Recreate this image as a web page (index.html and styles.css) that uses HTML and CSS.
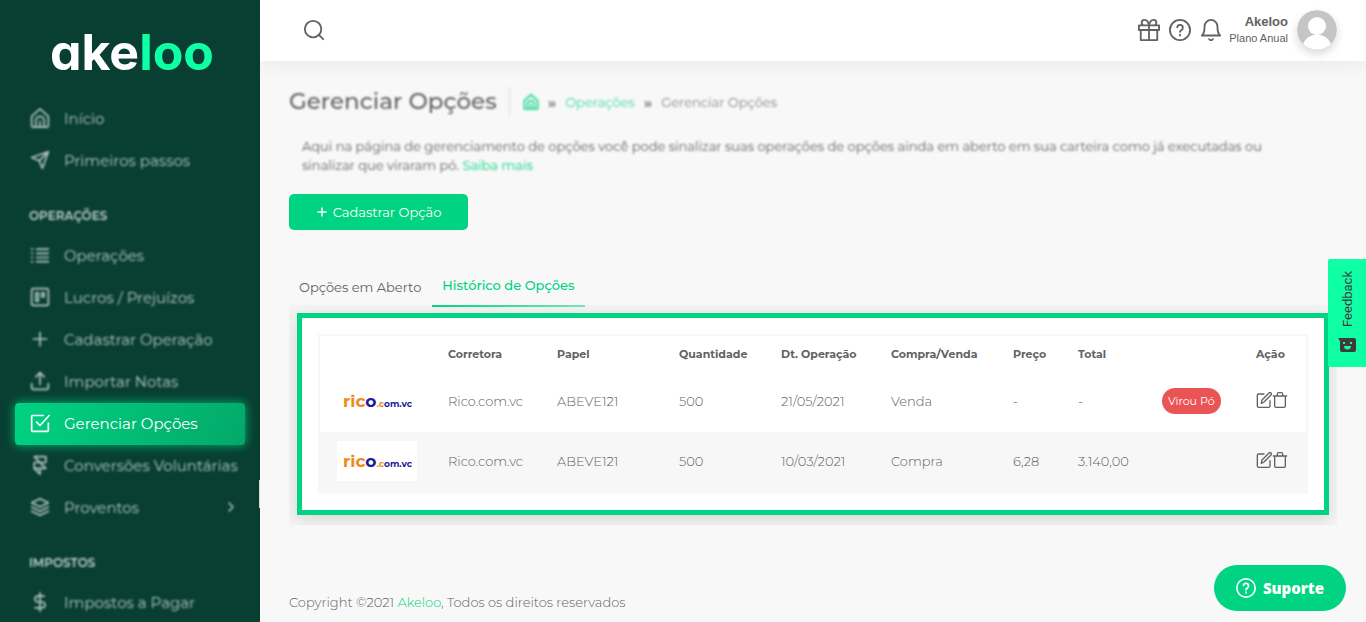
FILE: index.html
```html
<!DOCTYPE html>
<html lang="pt-BR">
<head>
	<meta charset="utf-8">
	<meta name="viewport" content="width=device-width, initial-scale=1.0">
	<title>Gerenciar Opções - Akeloo</title>
	<link rel="stylesheet" href="styles.css">
</head>
<body>
	<svg class="sprite" aria-hidden="true">
		<symbol id="home" viewBox="0 0 24 24"><path d="M2 10v11a2 2 0 0 0 2 2h16a2 2 0 0 0 2-2V10l-10-9z"/><path d="M7 22v-7a5 5 0 0 1 10 0v7M12 16v6"/></symbol>
		<symbol id="send" viewBox="0 0 24 24"><path d="M22 2 11 13M22 2l-7 20-4-9-9-4z"/></symbol>
		<symbol id="list" viewBox="0 0 24 24"><path d="M8 5h14M8 10h14M8 15h14M8 20h14M2 5h1M2 10h1M2 15h1M2 20h1"/></symbol>
		<symbol id="board" viewBox="0 0 24 24"><rect x="2" y="2" width="20" height="20" rx="2"/><path d="M7 7h3v10H7zM14 7h3v5h-3z"/></symbol>
		<symbol id="plus" viewBox="0 0 24 24"><path d="M12 4v16M4 12h16"/></symbol>
		<symbol id="upload" viewBox="0 0 24 24"><path d="M2 15v5a2 2 0 0 0 2 2h16a2 2 0 0 0 2-2v-5M17 7l-5-5-5 5M12 2v14"/></symbol>
		<symbol id="check" viewBox="0 0 24 24"><path d="m8 11 4 4L23 3"/><path d="M22 12v9a1 1 0 0 1-1 1H3a1 1 0 0 1-1-1V4a1 1 0 0 1 1-1h13"/></symbol>
		<symbol id="convert" viewBox="0 0 24 24"><path d="M5 16V9h14V2H5l14 14H5l7 7v-7"/></symbol>
		<symbol id="layers" viewBox="0 0 24 24"><path d="M12 2 2 7l10 5 10-5zM2 17l10 5 10-5M2 12l10 5 10-5"/></symbol>
		<symbol id="dollar" viewBox="0 0 24 24"><path d="M12 1v22M17 5H9.500a3.500 3.500 0 0 0 0 7h5a3.500 3.500 0 0 1 0 7H6"/></symbol>
		<symbol id="right" viewBox="0 0 24 24"><path d="m8 4 8 8-8 8"/></symbol>
		<symbol id="search" viewBox="0 0 24 24"><circle cx="11" cy="11" r="9"/><path d="m22 22-5-5"/></symbol>
		<symbol id="gift" viewBox="0 0 24 24"><path d="M3 12v11h18V12M1 7h22v5H1zM12 7v16M12 7H7a3 3 0 1 1 0-6c4 0 5 6 5 6zM12 7h5a3 3 0 1 0 0-6c-4 0-5 6-5 6z"/></symbol>
		<symbol id="help" viewBox="0 0 24 24"><circle cx="12" cy="12" r="11"/><path d="M9 9a3 3 0 0 1 6 1c0 2-3 2.500-3 4M12 17v1"/></symbol>
		<symbol id="bell" viewBox="0 0 24 24"><path d="M19 8A7 7 0 0 0 5 8c0 8-3 10-3 10h20s-3-2-3-10M14 22a2.300 2.300 0 0 1-4 0"/></symbol>
		<symbol id="edit" viewBox="0 0 24 24"><path d="M12 3H4a2 2 0 0 0-2 2v16a2 2 0 0 0 2 2h15a2 2 0 0 0 2-2v-8"/><path d="M19.500 1.500a2.100 2.100 0 0 1 3 3L12 15l-4 2 1-5z"/></symbol>
		<symbol id="trash" viewBox="0 0 24 24"><path d="M2 6h20M20 6v15a2 2 0 0 1-2 2H6a2 2 0 0 1-2-2V6M8 5V3a2 2 0 0 1 2-2h4a2 2 0 0 1 2 2v2"/></symbol>
	</svg>

	<div class="app">
		<aside class="sidebar">
			<a class="logo" href="#">ake<span>loo</span></a>
			<nav class="menu">
				<a class="item" href="#"><svg><use href="#home"/></svg>Início</a>
				<a class="item" href="#"><svg><use href="#send"/></svg>Primeiros passos</a>
				<p class="section">OPERAÇÕES</p>
				<a class="item" href="#"><svg><use href="#list"/></svg>Operações</a>
				<a class="item" href="#"><svg><use href="#board"/></svg>Lucros / Prejuízos</a>
				<a class="item" href="#"><svg><use href="#plus"/></svg>Cadastrar Operação</a>
				<a class="item" href="#"><svg><use href="#upload"/></svg>Importar Notas</a>
				<a class="item active" href="#"><svg><use href="#check"/></svg>Gerenciar Opções</a>
				<a class="item" href="#"><svg><use href="#convert"/></svg>Conversões Voluntárias</a>
				<a class="item" href="#"><svg><use href="#layers"/></svg>Proventos<svg class="arrow"><use href="#right"/></svg></a>
				<p class="section">IMPOSTOS</p>
				<a class="item" href="#"><svg><use href="#dollar"/></svg>Impostos a Pagar</a>
			</nav>
		</aside>

		<div class="page">
			<header class="topbar">
				<button class="icon-btn" aria-label="Buscar"><svg><use href="#search"/></svg></button>
				<div class="tools">
					<button class="icon-btn" aria-label="Presentes"><svg><use href="#gift"/></svg></button>
					<button class="icon-btn" aria-label="Ajuda"><svg><use href="#help"/></svg></button>
					<button class="icon-btn" aria-label="Notificações"><svg><use href="#bell"/></svg></button>
				</div>
				<div class="user"><strong>Akeloo</strong><span>Plano Anual</span></div>
				<svg class="avatar" viewBox="0 0 40 40"><circle cx="20" cy="20" r="20" fill="#c5c5c5"/><circle cx="20" cy="16" r="9" fill="#fff"/><path d="M6 34a15 15 0 0 1 28 0 20 20 0 0 1-28 0z" fill="#fff"/></svg>
			</header>

			<main class="content">
				<div class="heading">
					<h2>Gerenciar Opções</h2>
					<nav class="crumbs">
						<a href="#" aria-label="Início"><svg><use href="#home"/></svg></a>
						<b>»</b>
						<a href="#">Operações</a>
						<b>»</b>
						<span>Gerenciar Opções</span>
					</nav>
				</div>
				<p class="intro">Aqui na página de gerenciamento de opções você pode sinalizar suas operações de opções ainda em aberto em sua carteira como já executadas ou sinalizar que viraram pó. <a href="#">Saiba mais</a></p>
				<button class="add"><svg><use href="#plus"/></svg>Cadastrar Opção</button>

				<div class="tabs">
					<button class="tab">Opções em Aberto</button>
					<button class="tab on">Histórico de Opções</button>
				</div>
				<div class="card">
					<div class="highlight">
						<table>
							<colgroup>
								<col class="w-logo"><col class="w-broker"><col class="w-paper"><col class="w-qty"><col class="w-date"><col class="w-type"><col class="w-price"><col class="w-total"><col class="w-status"><col class="w-action">
							</colgroup>
							<thead>
								<tr><th></th><th>Corretora</th><th>Papel</th><th>Quantidade</th><th>Dt. Operação</th><th>Compra/Venda</th><th>Preço</th><th>Total</th><th></th><th>Ação</th></tr>
							</thead>
							<tbody>
								<tr>
									<td><div class="rico"><span class="orange">ric</span>o<small><span class="orange">.c</span>om.vc</small></div></td>
									<td>Rico.com.vc</td><td>ABEVE121</td><td>500</td><td>21/05/2021</td><td>Venda</td><td>-</td><td>-</td>
									<td><span class="badge">Virou Pó</span></td>
									<td><div class="actions"><button aria-label="Editar"><svg><use href="#edit"/></svg></button><button aria-label="Excluir"><svg><use href="#trash"/></svg></button></div></td>
								</tr>
								<tr>
									<td><div class="rico"><span class="orange">ric</span>o<small><span class="orange">.c</span>om.vc</small></div></td>
									<td>Rico.com.vc</td><td>ABEVE121</td><td>500</td><td>10/03/2021</td><td>Compra</td><td>6,28</td><td>3.140,00</td>
									<td></td>
									<td><div class="actions"><button aria-label="Editar"><svg><use href="#edit"/></svg></button><button aria-label="Excluir"><svg><use href="#trash"/></svg></button></div></td>
								</tr>
							</tbody>
						</table>
					</div>
				</div>
			</main>
			<footer class="footer">Copyright ©2021 <a href="#">Akeloo</a>, Todos os direitos reservados</footer>
		</div>
	</div>

	<button class="feedback">
		<span>Feedback</span>
		<svg viewBox="0 0 18 14"><path d="M0 0h16a2 2 0 0 1 2 2v10a2 2 0 0 1-2 2H4a2 2 0 0 1-2-2V3z" fill="#3c3c3b"/><path d="M5 4h2v2H5zM12 4h2v2h-2zM6 8h7a3 3 0 0 1-7 0z" fill="#0fffa5"/></svg>
	</button>
	<button class="support"><svg><use href="#help"/></svg>Suporte</button>
</body>
</html>
```
FILE: styles.css
```css
* {
	box-sizing: border-box;
}
body {
	margin: 0;
	font-family: Montserrat, Inter, sans-serif;
	font-size: 13px;
	color: #626262;
	background-color: #f8f8f8;
}
p, h2 {
	margin: 0;
}
a {
	color: #00d382;
	text-decoration: none;
}
button {
	font: inherit;
	color: inherit;
	background: none;
	border: none;
	padding: 0;
	cursor: pointer;
}
svg {
	display: block;
	flex: none;
	fill: none;
	stroke: currentColor;
	stroke-width: 2;
	stroke-linecap: round;
	stroke-linejoin: round;
}
.sprite {
	position: absolute;
	width: 0;
	height: 0;
}
.app {
	display: flex;
	min-height: 100vh;
}

/* sidebar */
.sidebar {
	position: sticky;
	top: 0;
	flex: none;
	width: 260px;
	height: 100vh;
	overflow: hidden;
	background-color: #083f32;
}
.sidebar::after {
	content: "";
	position: absolute;
	top: 480px;
	right: 0;
	width: 1px;
	height: 28px;
	background-color: #cfd9d6;
}
.logo {
	display: block;
	height: 98px;
	padding: 22px 0 0 4px;
	font-family: Inter, sans-serif;
	font-size: 50px;
	font-weight: 700;
	line-height: 60px;
	font-feature-settings: "cv11";
	text-align: center;
	color: #fff;
}
.logo span {
	color: #0fffa5;
}
.menu {
	padding: 0 15px;
}
.item {
	display: flex;
	align-items: center;
	gap: 14px;
	height: 42px;
	padding: 0 8px 2px 15px;
	font-size: 15px;
	white-space: nowrap;
	color: #b5c5c1;
	filter: blur(1px);
}
.item svg {
	width: 20px;
	height: 20px;
}
.item .arrow {
	width: 12px;
	height: 12px;
	margin-left: auto;
	stroke-width: 3;
}
.item.active {
	border-radius: 4px;
	color: #fff;
	background-image: linear-gradient(118deg, #00d382, #04a869);
	box-shadow: 0 0 10px 1px rgba(0, 211, 130, .7);
	filter: none;
}
.section {
	height: 53px;
	padding: 24px 14px 0;
	font-size: 12px;
	font-weight: 600;
	line-height: 20px;
	color: #c5d2cf;
	filter: blur(1px);
}

/* top bar */
.page {
	display: flex;
	flex: 1;
	flex-direction: column;
	min-width: 0;
}
.topbar {
	display: flex;
	align-items: center;
	gap: 7px;
	height: 61px;
	padding: 0 29px 2px 43px;
	background-color: #fff;
	box-shadow: 0 4px 20px rgba(0, 0, 0, .06);
}
.tools {
	display: flex;
	gap: 9px;
	margin-left: auto;
}
.icon-btn svg {
	width: 22px;
	height: 22px;
}
.user {
	display: flex;
	flex-direction: column;
	padding-right: 2px;
	font-family: "Liberation Sans", sans-serif;
	font-size: 11px;
	line-height: 17px;
	text-align: right;
}
.user strong {
	font-size: 13px;
}
.avatar {
	width: 40px;
	height: 40px;
	border-radius: 50%;
	stroke: none;
	box-shadow: 0 4px 8px rgba(0, 0, 0, .15);
}

/* content */
.content {
	padding: 26px 29px 0;
}
.heading {
	display: flex;
	align-items: center;
	filter: blur(1px);
}
.heading h2 {
	padding-right: 12px;
	border-right: 1px solid #dcdcdc;
	font-size: 23px;
	font-weight: 500;
	line-height: 28px;
}
.crumbs {
	display: flex;
	align-items: center;
	gap: 9px;
	padding: 2px 0 0 13px;
	opacity: .75;
}
.crumbs b {
	font-size: 15px;
}
.crumbs svg {
	width: 16px;
	height: 16px;
	stroke-width: 3;
}
.intro {
	margin-top: 22px;
	padding: 0 36px 0 13px;
	line-height: 19px;
	filter: blur(1px);
}
.add {
	display: flex;
	align-items: center;
	justify-content: center;
	gap: 5px;
	width: 179px;
	height: 36px;
	margin-top: 19px;
	border-radius: 5px;
	color: #fff;
	background-color: #00d382;
}
.add svg {
	width: 12px;
	height: 12px;
	stroke-width: 3;
}
.tabs {
	display: flex;
	gap: 1px;
	margin-top: 37px;
}
.tab {
	height: 40px;
	padding: 2px 10px 0;
	border-bottom: 2px solid transparent;
}
.tab.on {
	padding: 0 10px 2px;
	border-image: linear-gradient(to right, #00d382, #7be3ba) 1;
	font-weight: 500;
	color: #00d382;
}
.card {
	margin-top: -2px;
	padding: 8px 8px 10px;
	overflow: hidden;
	background-color: #f4f4f4;
}
.highlight {
	padding: 16px;
	border: 5px solid #00d382;
	background-color: #fff;
	box-shadow: 0 4px 16px rgba(0, 0, 0, .12);
}
table {
	width: 100%;
	table-layout: fixed;
	border: 2px solid #f8f8f8;
	border-spacing: 0;
}
.w-logo { width: 111px; }
.w-broker { width: 109px; }
.w-paper { width: 122px; }
.w-qty { width: 102px; }
.w-date { width: 110px; }
.w-type { width: 122px; }
.w-price { width: 65px; }
.w-total { width: 84px; }
.w-status { width: 94px; }
.w-action { width: 67px; }
th, td {
	padding: 0 0 0 17px;
	text-align: left;
	white-space: nowrap;
}
th {
	height: 36px;
	font-size: 11px;
	font-weight: 700;
}
td {
	height: 60px;
	padding-bottom: 2px;
	font-weight: 300;
}
tbody tr:nth-child(even) {
	background-color: #f7f7f7;
}
.rico {
	width: 80px;
	height: 40px;
	padding-left: 6px;
	font-size: 17px;
	font-weight: 700;
	line-height: 40px;
	color: #1b1b98;
	background-color: #fff;
}
.rico small {
	font-size: 9px;
	line-height: 1;
}
.orange {
	color: #f08a1d;
}
.badge {
	display: inline-block;
	padding: 0 6px;
	border-radius: 13px;
	font-size: 11px;
	font-weight: 400;
	line-height: 26px;
	color: #fff;
	background-color: #ea5455;
}
.actions {
	display: flex;
	padding-bottom: 2px;
}
.actions svg {
	width: 16px;
	height: 16px;
}
.footer {
	margin-top: auto;
	padding: 0 29px 10px;
	font-weight: 300;
	line-height: 20px;
}

/* floating buttons */
.feedback {
	position: fixed;
	top: 259px;
	right: 0;
	display: flex;
	flex-direction: column;
	align-items: center;
	justify-content: space-between;
	width: 38px;
	height: 108px;
	padding: 12px 0 15px;
	border-radius: 2px 0 0 2px;
	font-family: Roboto, sans-serif;
	color: #3c3c3b;
	background-color: #0fffa5;
}
.feedback span {
	writing-mode: vertical-rl;
	transform: rotate(180deg);
}
.feedback svg {
	width: 18px;
	height: 14px;
	stroke: none;
}
.support {
	position: fixed;
	right: 20px;
	bottom: 11px;
	display: flex;
	align-items: center;
	gap: 7px;
	height: 46px;
	padding: 0 22px;
	border-radius: 23px;
	font-family: "Open Sans", sans-serif;
	font-size: 15px;
	font-weight: 800;
	color: #fff;
	background-color: #00d382;
}
.support svg {
	width: 20px;
	height: 20px;
}
```
